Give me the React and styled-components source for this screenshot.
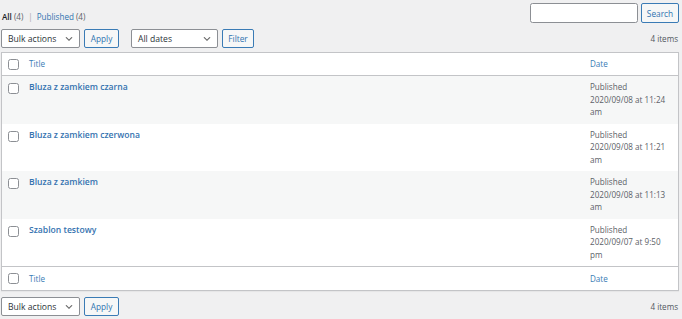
import React from 'react';
import styled, { createGlobalStyle } from 'styled-components';

const Global = createGlobalStyle`
  html, body { margin: 0; padding: 0; background: #f0f0f1; }
  body {
    font-family: "Open Sans", "Noto Sans", sans-serif;
    font-size: 8.1px;
    color: #3c434a;
  }
  * { box-sizing: border-box; }
`;

const Page = styled.div`
  padding: 3px 3px 0 1px;
`;

const TopBar = styled.div`
  display: flex;
  justify-content: space-between;
  align-items: flex-start;
  height: 20px;
`;

const Views = styled.ul`
  margin: 8px 0 0 1px;
  padding: 0;
  list-style: none;
  display: flex;
  line-height: 12px;
  color: #646970;
`;

const ViewItem = styled.li`
  display: flex;
  gap: 2px;
`;

const ViewLabel = styled.span`
  color: ${p => (p.$current ? '#1d2327' : '#2f73b0')};
  font-weight: ${p => (p.$current ? 600 : 400)};
`;

const Count = styled.span`
  color: #5b6167;
`;

const Sep = styled.span`
  color: #a7aaad;
  margin: 0 4px 0 5px;
`;

const SearchBox = styled.div`
  display: flex;
  gap: 3px;
`;

const SearchInput = styled.div`
  width: 108px;
  height: 20px;
  background: #fff;
  border: 1px solid #8c8f94;
  border-radius: 2.5px;
`;

const Button = styled.div`
  height: ${p => (p.$h ? p.$h : 19)}px;
  width: ${p => p.$w}px;
  display: flex;
  align-items: center;
  justify-content: center;
  border: 1px solid #3a7bb5;
  border-radius: 2px;
  background: #f6f7f7;
  color: #2f73b0;
  font-size: 8.3px;
`;

const Toolbar = styled.div`
  display: flex;
  align-items: center;
  height: 19px;
  margin-top: ${p => p.$top}px;
`;

const Group = styled.div`
  display: flex;
  align-items: center;
  gap: 4px;
  margin-right: ${p => p.$mr || 0}px;
`;

const Select = styled.div`
  width: ${p => p.$w}px;
  height: 19px;
  display: flex;
  align-items: center;
  justify-content: space-between;
  padding: 0 5px 0 6px;
  background: #fff;
  border: 1px solid #8c8f94;
  border-radius: 2px;
  color: #2c3338;
  font-size: 8.6px;
`;

const Chevron = () => (
  <svg width="10" height="10" viewBox="0 0 20 20">
    <path d="M5 6l5 5 5-5 2 1-7 7-7-7 2-1z" fill="#666" />
  </svg>
);

const Items = styled.div`
  margin-left: auto;
  margin-right: 1px;
  color: #50575e;
`;

const Table = styled.table`
  width: 100%;
  margin-top: 4px;
  border-collapse: collapse;
  table-layout: fixed;
  background: #fff;
  border: 1px solid #c3c4c7;
  box-shadow: 0 1px 1px rgba(0, 0, 0, 0.04);
`;

const HeadCell = styled.th`
  text-align: left;
  font-weight: 400;
  padding: 5px 6.5px;
  line-height: 12px;
  height: ${p => (p.$foot ? 24 : 23)}px;
  color: #3a7bb5;
  vertical-align: middle;
  border-bottom: ${p => (p.$foot ? 'none' : '1px solid #c3c4c7')};
  border-top: ${p => (p.$foot ? '1px solid #c3c4c7' : 'none')};
`;

const CheckHead = styled.th`
  padding: 0 0 0 6px;
  vertical-align: middle;
  border-bottom: ${p => (p.$foot ? 'none' : '1px solid #c3c4c7')};
  border-top: ${p => (p.$foot ? '1px solid #c3c4c7' : 'none')};
`;

const CheckCell = styled.th`
  padding: 7px 0 0 6px;
  vertical-align: top;
  text-align: left;
`;

const Box = styled.div`
  width: 11px;
  height: 11px;
  border: 1px solid #8c8f94;
  border-radius: 2.5px;
  background: #fff;
`;

const Row = styled.tr`
  background: ${p => (p.$alt ? '#f6f7f7' : '#fff')};
`;

const Cell = styled.td`
  vertical-align: top;
  padding: 5px 6.5px 5px;
  line-height: 12.5px;
  height: 47.5px;
  color: #5b6167;
`;

const RowTitle = styled.a`
  font-size: 8.6px;
  font-weight: 600;
  color: #3573b0;
  text-decoration: none;
`;

const rows = [
  { title: 'Bluza z zamkiem czarna', date: '2020/09/08 at 11:24', ap: 'am' },
  { title: 'Bluza z zamkiem czerwona', date: '2020/09/08 at 11:21', ap: 'am' },
  { title: 'Bluza z zamkiem', date: '2020/09/08 at 11:13', ap: 'am' },
  { title: 'Szablon testowy', date: '2020/09/07 at 9:50', ap: 'pm' },
];

const HeaderRow = ({ foot }) => (
  <tr>
    <CheckHead $foot={foot}><Box /></CheckHead>
    <HeadCell $foot={foot}>Title</HeadCell>
    <HeadCell $foot={foot}>Date</HeadCell>
  </tr>
);

export default function App() {
  return (
    <>
      <Global />
      <Page>
        <TopBar>
          <Views>
            <ViewItem>
              <ViewLabel $current>All</ViewLabel>
              <Count>(4)</Count>
            </ViewItem>
            <Sep>|</Sep>
            <ViewItem>
              <ViewLabel>Published</ViewLabel>
              <Count>(4)</Count>
            </ViewItem>
          </Views>
          <SearchBox>
            <SearchInput />
            <Button $w={38} $h={20}>Search</Button>
          </SearchBox>
        </TopBar>

        <Toolbar $top={6}>
          <Group $mr={12}>
            <Select $w={79}>Bulk actions<Chevron /></Select>
            <Button $w={35}>Apply</Button>
          </Group>
          <Group>
            <Select $w={87}>All dates<Chevron /></Select>
            <Button $w={32}>Filter</Button>
          </Group>
          <Items>4 items</Items>
        </Toolbar>

        <Table>
          <colgroup>
            <col style={{ width: 21 }} />
            <col />
            <col style={{ width: 95 }} />
          </colgroup>
          <thead>
            <HeaderRow />
          </thead>
          <tbody>
            {rows.map((r, i) => (
              <Row key={r.title} $alt={i % 2 === 0}>
                <CheckCell><Box /></CheckCell>
                <Cell><RowTitle href="#">{r.title}</RowTitle></Cell>
                <Cell>
                  Published<br />
                  {r.date} {r.ap}
                </Cell>
              </Row>
            ))}
          </tbody>
          <tfoot>
            <HeaderRow foot />
          </tfoot>
        </Table>

        <Toolbar $top={6}>
          <Group>
            <Select $w={79}>Bulk actions<Chevron /></Select>
            <Button $w={35}>Apply</Button>
          </Group>
          <Items>4 items</Items>
        </Toolbar>
      </Page>
    </>
  );
}
